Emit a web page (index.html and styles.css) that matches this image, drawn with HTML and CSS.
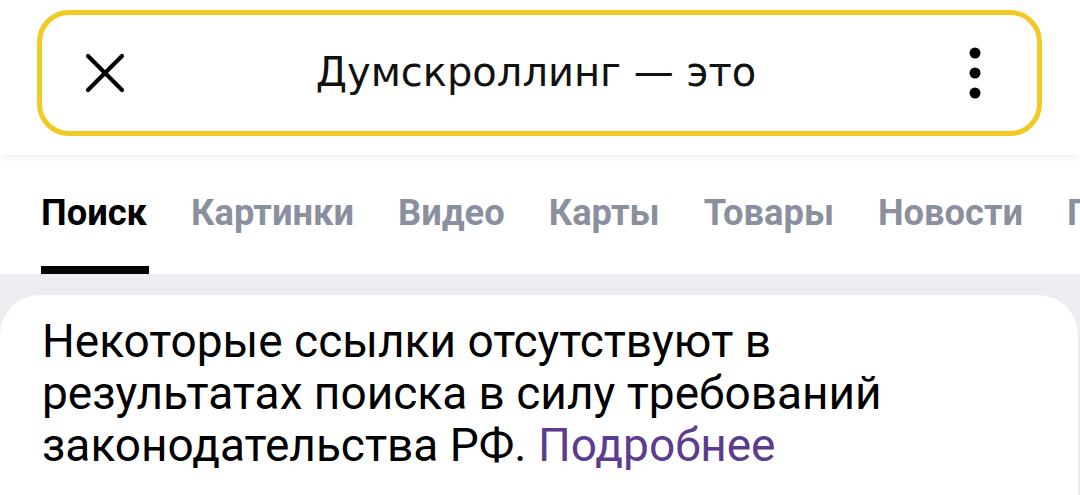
FILE: index.html
```html
<!DOCTYPE html>
<html lang="ru">
<head>
<meta charset="utf-8">
<link rel="stylesheet" href="styles.css">
</head>
<body>
<header class="header">
  <div class="search">
    <button class="icon-btn close" aria-label="Закрыть">
      <svg width="40" height="40" viewBox="0 0 40 40"><path d="M3 3 L37 37 M37 3 L3 37" stroke="#000" stroke-width="4.2" stroke-linecap="round" fill="none"/></svg>
    </button>
    <div class="query">Думскроллинг — это</div>
    <button class="icon-btn more" aria-label="Ещё">
      <svg width="12" height="52" viewBox="0 0 12 52"><circle cx="6" cy="6" r="5.5"/><circle cx="6" cy="26" r="5.5"/><circle cx="6" cy="46" r="5.5"/></svg>
    </button>
  </div>
</header>
<nav class="tabs">
  <a class="tab active">Поиск</a>
  <a class="tab">Картинки</a>
  <a class="tab">Видео</a>
  <a class="tab">Карты</a>
  <a class="tab">Товары</a>
  <a class="tab">Новости</a>
  <a class="tab">Переводчик</a>
</nav>
<main class="content">
  <section class="card">
    <p class="notice">Некоторые ссылки отсутствуют в результатах поиска в силу требований законодательства РФ. <a class="more-link">Подробнее</a></p>
  </section>
</main>
</body>
</html>
```

FILE: styles.css
```css
html, body {
  margin: 0;
  padding: 0;
  background: #ebedf0;
  overflow: hidden;
  width: 1080px;
  height: 495px;
}
body {
  font-family: Roboto, "Noto Sans", sans-serif;
}
.header {
  background: #fff;
  padding: 10px 38px 19px 37px;
  height: 126px;
  box-shadow: 0 3px 6px rgba(0,0,0,0.06);
  position: relative;
  z-index: 1;
}
.search {
  box-sizing: border-box;
  height: 126px;
  border: 5px solid #f2ca25;
  border-radius: 32px;
  display: flex;
  align-items: center;
  padding: 0 56px 0 43px;
}
.icon-btn {
  background: none;
  border: 0;
  padding: 0;
  display: flex;
  align-items: center;
  justify-content: center;
}
.close {
  width: 40px;
  height: 40px;
}
.query {
  flex: 1;
  text-align: center;
  font-family: "DejaVu Sans", sans-serif;
  font-size: 40px;
  color: #111;
  padding: 0 22px 2px 0;
}
.more {
  width: 12px;
}
.tabs {
  background: #fff;
  display: flex;
  gap: 44px;
  padding: 0 0 0 41px;
  height: 119px;
  white-space: nowrap;
  overflow: hidden;
}
.tab {
  font-weight: 700;
  font-size: 36.3px;
  color: #8a909e;
  padding-top: 36px;
  box-sizing: border-box;
  height: 119px;
  border-bottom: 8px solid transparent;
  flex-shrink: 0;
}
.tab.active {
  color: #000;
  border-bottom-color: #000;
  padding-right: 2px;
  margin-right: -2px;
}
.content {
  padding-top: 21px;
}
.card {
  box-sizing: border-box;
  background: #fff;
  border-radius: 40px 40px 0 0;
  margin: 0 2px 0 0;
  padding: 20px 42px 0;
  height: 200px;
}
.notice {
  margin: 0;
  font-size: 46px;
  line-height: 52px;
  color: #000;
  max-width: 900px;
}
.more-link {
  color: #5b3c8f;
}
```
